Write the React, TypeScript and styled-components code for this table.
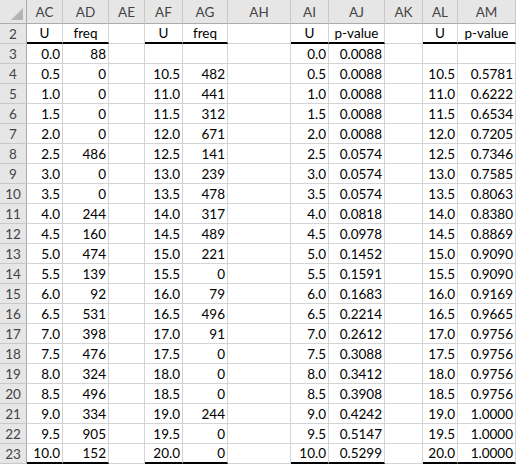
import styled, { createGlobalStyle } from "styled-components";

const GlobalStyle = createGlobalStyle`
    html, body {
        margin: 0;
        padding: 0;
        background: #ffffff;
        overflow: hidden;
    }
`;

const Sheet = styled.div`
    display: grid;
    grid-template-columns: 27px 36px 46px 36px 38px 45px 63px 38px 56px 38px 35px 58px;
    grid-auto-rows: 20px;
    grid-template-rows: 24px;
    font-family: Lato, "Liberation Sans", sans-serif;
    font-size: 13.5px;
    color: #000;
`;

const Corner = styled.div`
    position: relative;
    background: #e6e6e6;
    border-right: 1px solid #ababab;
    border-bottom: 1px solid #ababab;
    box-sizing: border-box;
    &::after {
        content: "";
        position: absolute;
        right: 3px;
        bottom: 3px;
        width: 0;
        height: 0;
        border-left: 12px solid transparent;
        border-bottom: 12px solid #b4b4b4;
    }
`;

const ColHead = styled.div`
    background: #e6e6e6;
    border-right: 1px solid #c8c8c8;
    border-bottom: 1px solid #ababab;
    box-sizing: border-box;
    display: flex;
    align-items: center;
    justify-content: center;
    color: #444;
    padding-top: 1px;
`;

const RowHead = styled.div`
    background: #e6e6e6;
    border-right: 1px solid #ababab;
    border-bottom: 1px solid #c8c8c8;
    box-sizing: border-box;
    display: flex;
    align-items: center;
    justify-content: center;
    color: #444;
`;

const Cell = styled.div<{ $align: "left" | "center" | "right"; $rule?: boolean }>`
    border-right: 1px solid #d4d4d4;
    border-bottom: ${(p) => (p.$rule ? "2px solid #000" : "1px solid #d4d4d4")};
    box-sizing: border-box;
    display: flex;
    align-items: center;
    justify-content: ${(p) => (p.$align === "right" ? "flex-end" : p.$align === "center" ? "center" : "flex-start")};
    padding: 0 2px;
    white-space: nowrap;
    overflow: visible;
`;

const letters = ["AC", "AD", "AE", "AF", "AG", "AH", "AI", "AJ", "AK", "AL", "AM"];
// columns that hold data (the blank spacer columns get no rule)
const dataCols = [0, 1, 3, 4, 6, 7, 9, 10];

const freqA = [88, 0, 0, 0, 0, 486, 0, 0, 244, 160, 474, 139, 92, 531, 398, 476, 324, 496, 334, 905, 152];
const freqB = [482, 441, 312, 671, 141, 239, 478, 317, 489, 221, 0, 79, 496, 91, 0, 0, 0, 244, 0, 0];
const pA = ["0.0088", "0.0088", "0.0088", "0.0088", "0.0088", "0.0574", "0.0574", "0.0574", "0.0818", "0.0978",
    "0.1452", "0.1591", "0.1683", "0.2214", "0.2612", "0.3088", "0.3412", "0.3908", "0.4242", "0.5147", "0.5299"];
const pB = ["0.5781", "0.6222", "0.6534", "0.7205", "0.7346", "0.7585", "0.8063", "0.8380", "0.8869", "0.9090",
    "0.9090", "0.9169", "0.9665", "0.9756", "0.9756", "0.9756", "0.9756", "1.0000", "1.0000", "1.0000"];

function buildRow(r: number): string[] {
    if (r === 2) return ["U", "freq", "", "U", "freq", "", "U", "p-value", "", "U", "p-value"];
    const i = r - 3;
    const u = (i * 0.5).toFixed(1);
    const hi = r >= 4 ? (10 + i * 0.5).toFixed(1) : "";
    const fb = r >= 4 ? String(freqB[r - 4]) : "";
    const pb = r >= 4 ? pB[r - 4] : "";
    return [u, String(freqA[i]), "", hi, fb, "", u, pA[i], "", hi, pb];
}

const rows = Array.from({ length: 22 }, (_, k) => k + 2);

export default function App() {
    return (
        <>
            <GlobalStyle />
            <Sheet>
                <Corner />
                {letters.map((l) => <ColHead key={l}>{l}</ColHead>)}
                {rows.map((r) => {
                    const values = buildRow(r);
                    const ruled = r === 2 || r === 23;
                    return [
                        <RowHead key={`h${r}`}>{r}</RowHead>,
                        ...values.map((v, c) => (
                            <Cell
                                key={`${r}-${c}`}
                                $align={r === 2 ? "center" : "right"}
                                $rule={ruled && dataCols.includes(c)}
                            >
                                {v}
                            </Cell>
                        )),
                    ];
                })}
            </Sheet>
        </>
    );
}
